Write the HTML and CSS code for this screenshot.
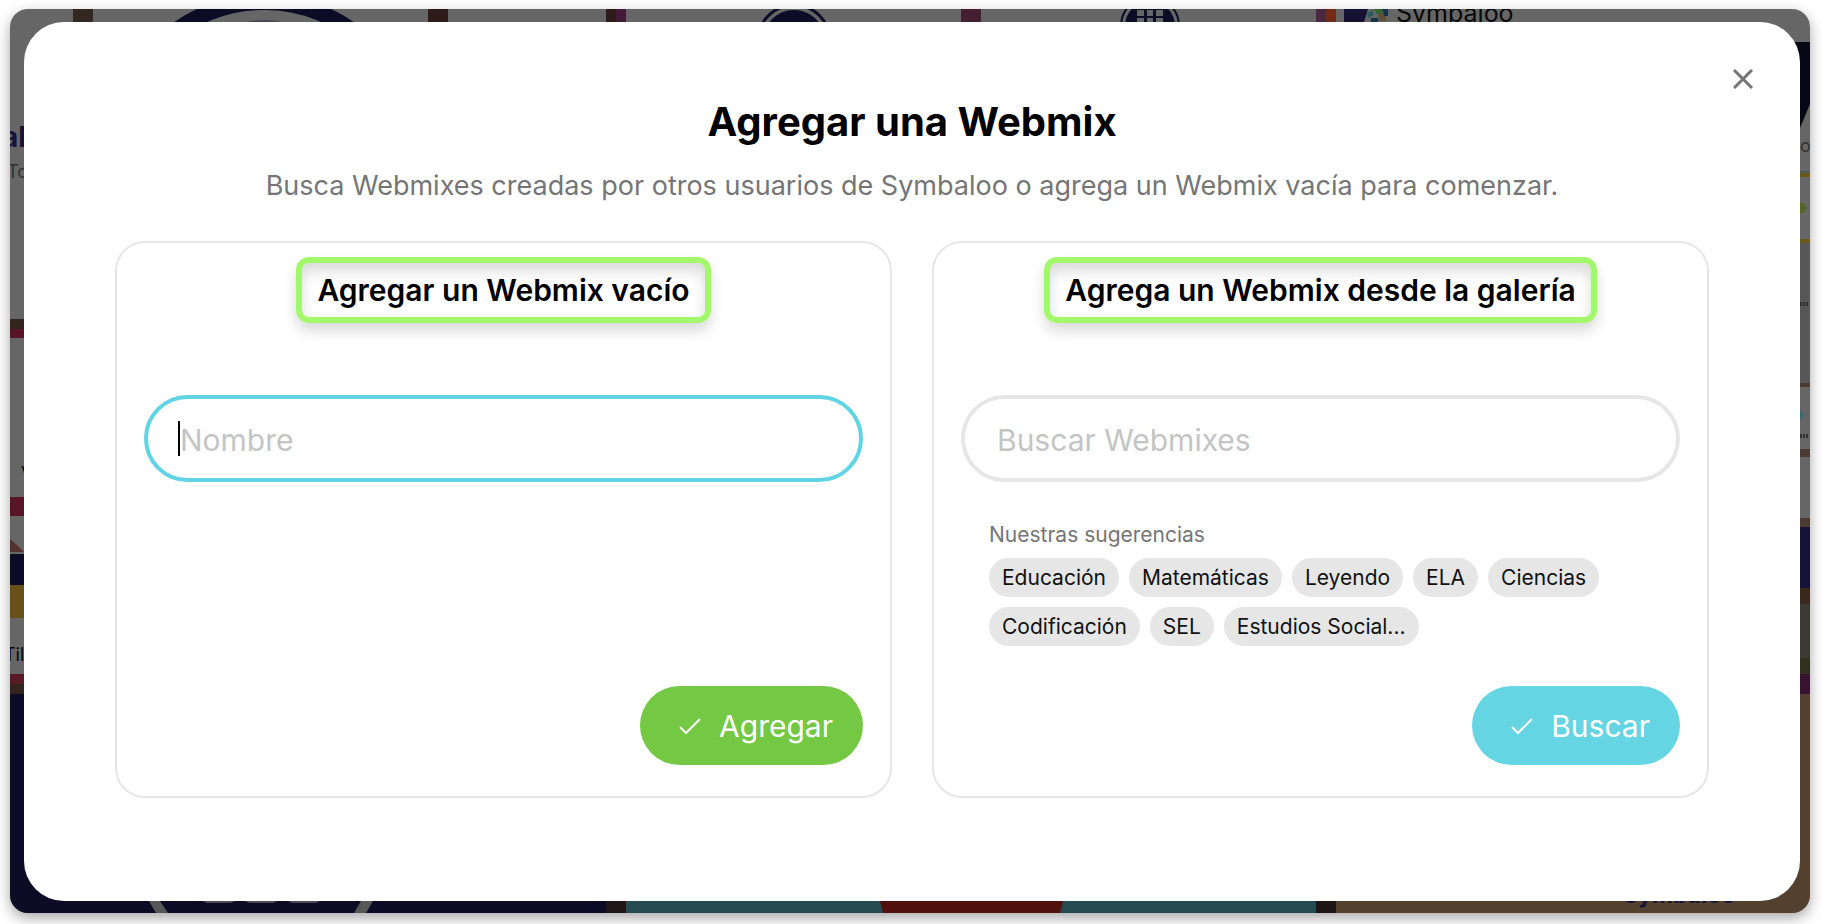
FILE: index.html
```html
<!DOCTYPE html>
<html lang="es">
    <head>
        <title>Agregar una Webmix</title>
        <meta charset="UTF-8">
        <link rel="stylesheet" href="styles.css">
    </head>
    <body>
        <div class="window">
            <!-- webmix detrás del diálogo -->
            <svg class="backdrop" viewBox="10 9 1800 904" preserveAspectRatio="xMidYMid slice" aria-hidden="true">
                <rect x="10" y="9" width="1800" height="904" fill="#666"/>
                <!-- mosaicos de arriba -->
                <rect x="73" y="9" width="20" height="60" fill="#332722"/>
                <rect x="428" y="9" width="20" height="60" fill="#2d1c19"/>
                <rect x="606" y="9" width="10" height="60" fill="#2d1c19"/>
                <rect x="616" y="9" width="10" height="60" fill="#421c36"/>
                <rect x="961" y="9" width="20" height="60" fill="#451e31"/>
                <rect x="1316" y="9" width="10" height="60" fill="#4b2840"/>
                <rect x="1326" y="9" width="10" height="60" fill="#752b13"/>
                <circle cx="264" cy="152" r="150" fill="none" stroke="#0e0b27" stroke-width="16"/>
                <ellipse cx="264" cy="24" rx="20" ry="4" fill="#484756"/>
                <circle cx="794" cy="41" r="31" fill="#0e0b27"/>
                <circle cx="794" cy="41" r="36" fill="none" stroke="#0e0b27" stroke-width="3"/>
                <circle cx="1150" cy="26" r="25" fill="#0e0b27"/>
                <circle cx="1150" cy="26" r="29" fill="none" stroke="#0e0b27" stroke-width="2"/>
                <path d="M1137 10h7v6h-7zM1147 10h6v6h-6zM1156 10h7v6h-7zM1137 18h7v6h-7zM1147 18h6v6h-6zM1156 18h7v6h-7z" fill="#666"/>
                <path d="M1344 9h24l-4 13h-20z" fill="#151234"/>
                <path d="M1367 13l5-3 2 5-6 3z" fill="#2b5a61"/>
                <path d="M1374 9h8v5h-5z" fill="#35642c"/>
                <path d="M1378 14h8v7h-7z" fill="#63503a"/>
                <path d="M1382 9h6v7h-4zM1371 18h7v4h-7z" fill="#17344d"/>
                <text x="1396" y="22" class="tile-name">Symbaloo</text>
                <!-- mosaicos de la izquierda -->
                <text x="2" y="147" class="tile-brand">al</text>
                <text x="7" y="178" class="tile-small">To</text>
                <rect x="10" y="319" width="20" height="10" fill="#33241d"/>
                <rect x="10" y="329" width="20" height="9" fill="#5a1429"/>
                <text x="21" y="476" class="tile-label">v</text>
                <rect x="10" y="497" width="20" height="19" fill="#5a1429"/>
                <path d="M10 539l8 7 6 6H10z" fill="#54312a"/>
                <rect x="10" y="554" width="20" height="31" fill="#0e0b27"/>
                <rect x="10" y="585" width="20" height="33" fill="#695019"/>
                <text x="4" y="661" class="tile-label">Til</text>
                <rect x="10" y="674" width="20" height="10" fill="#591a27"/>
                <rect x="10" y="684" width="20" height="10" fill="#33241d"/>
                <!-- mosaicos de la derecha -->
                <path d="M1770 42h40v62l-10 24h-30z" fill="#080715"/>
                <text x="1800" y="152" class="tile-small">o</text>
                <rect x="1795" y="171" width="15" height="2" fill="#4d585f"/>
                <rect x="1795" y="173" width="15" height="4" fill="#6c571d"/>
                <circle cx="1801" cy="208" r="5" fill="#53661f"/>
                <rect x="1795" y="239" width="15" height="4" fill="#6c571d"/>
                <rect x="1795" y="243" width="15" height="140" fill="#575757"/>
                <path d="M1800 304h8M1800 436h9" stroke="#333" stroke-width="4" stroke-dasharray="2 1"/>
                <rect x="1795" y="383" width="15" height="4" fill="#4c3b30"/>
                <circle cx="1799" cy="415" r="4" fill="#326a70"/>
                <rect x="1795" y="449" width="15" height="8" fill="#4c3b30"/>
                <rect x="1795" y="518" width="15" height="9" fill="#4c3b30"/>
                <rect x="1795" y="527" width="15" height="61" fill="#171237"/>
                <rect x="1795" y="588" width="15" height="16" fill="#38291c"/>
                <rect x="1795" y="604" width="15" height="54" fill="#3b3b33"/>
                <rect x="1795" y="658" width="15" height="16" fill="#30301e"/>
                <rect x="1795" y="674" width="15" height="20" fill="#37132f"/>
                <!-- mosaicos de abajo -->
                <rect x="10" y="694" width="596" height="219" fill="#0e0b27"/>
                <rect x="606" y="694" width="20" height="219" fill="#211518"/>
                <rect x="626" y="694" width="690" height="219" fill="#254b50"/>
                <rect x="1316" y="694" width="20" height="219" fill="#1e1517"/>
                <rect x="1336" y="694" width="474" height="219" fill="#54402f"/>
                <path d="M149 901h11l8 12h-12zM361 901h12l-7 12h-12z" fill="#575757"/>
                <path d="M203 901h32l-4 2h-24zM245 901h32l-4 2h-24zM288 901h32l-4 2h-24z" fill="#4b4b50"/>
                <path d="M880 901h183l-3 12h-177z" fill="#51110d"/>
                <text x="1623" y="903" class="tile-logo">Symbaloo</text>
            </svg>

            <div class="modal" role="dialog" aria-labelledby="modal-title">
                <button class="close" type="button" aria-label="Cerrar">
                    <svg width="20" height="20" viewBox="0 0 20 20"><path d="M1 1l18 18M19 1L1 19"/></svg>
                </button>
                <h1 id="modal-title">Agregar una Webmix</h1>
                <p class="intro">Busca Webmixes creadas por otros usuarios de Symbaloo o agrega un Webmix vacía para comenzar.</p>

                <div class="cards">
                    <form class="card">
                        <h2><label for="nombre">Agregar un Webmix vacío</label></h2>
                        <div class="field">
                            <input class="active" id="nombre" type="text" placeholder="Nombre">
                            <span class="caret"></span>
                        </div>
                        <button class="btn btn-add" type="button">
                            <svg width="24" height="20" viewBox="0 0 24 20"><path d="M2 11l6 6L22 3"/></svg>
                            Agregar
                        </button>
                    </form>

                    <form class="card">
                        <h2><label for="buscar">Agrega un Webmix desde la galería</label></h2>
                        <div class="field">
                            <input id="buscar" type="text" placeholder="Buscar Webmixes">
                        </div>
                        <div class="suggestions">
                            <p>Nuestras sugerencias</p>
                            <div class="chips">
                                <button type="button">Educación</button>
                                <button type="button">Matemáticas</button>
                                <button type="button">Leyendo</button>
                                <button type="button">ELA</button>
                                <button type="button">Ciencias</button>
                                <button type="button">Codificación</button>
                                <button type="button">SEL</button>
                                <button type="button">Estudios Social...</button>
                            </div>
                        </div>
                        <button class="btn btn-search" type="button">
                            <svg width="24" height="20" viewBox="0 0 24 20"><path d="M2 11l6 6L22 3"/></svg>
                            Buscar
                        </button>
                    </form>
                </div>
            </div>
        </div>
    </body>
</html>
```
FILE: styles.css
```css
* {
    margin: 0;
    padding: 0;
    box-sizing: border-box;
}

body {
    display: flex;
    min-height: 100vh;
    padding: 9px 12px 11px 10px;
    background: #fff;
    font-family: Inter, "Open Sans", sans-serif;
    color: #000;
}

button,
input {
    font-family: inherit;
    border: 0;
}

button {
    cursor: pointer;
}

.window {
    position: relative;
    display: flex;
    flex: 1;
    padding: 13px 10px 12px 14px;
    border-radius: 18px;
    box-shadow: 0 5px 14px rgba(0, 0, 0, 0.35);
}

.backdrop {
    position: absolute;
    top: 0;
    left: 0;
    width: 100%;
    height: 100%;
    border-radius: 18px;
}

.tile-name {
    font-size: 25px;
    fill: #080808;
}

.tile-brand {
    font-size: 28px;
    font-weight: 700;
    fill: #17133a;
}

.tile-logo {
    font-size: 23px;
    font-weight: 700;
    fill: #17133a;
}

.tile-small {
    font-size: 18px;
    fill: #333;
}

.tile-label {
    font-size: 18px;
    fill: #080808;
}

.modal {
    position: relative;
    flex: 1;
    padding: 78px 91px 60px;
    background: #fff;
    border-radius: 40px;
}

.close {
    position: absolute;
    top: 41px;
    right: 41px;
    display: flex;
    padding: 6px;
    background: none;
}

.close svg {
    fill: none;
    stroke: #757575;
    stroke-width: 3;
}

h1 {
    font-size: 40px;
    line-height: 44px;
    text-align: center;
}

.intro {
    margin: 26px 0 39px;
    font-size: 27px;
    line-height: 32px;
    text-align: center;
    color: #757575;
}

.cards {
    display: grid;
    grid-template-columns: 1fr 1fr;
    gap: 40px;
}

.card {
    display: flex;
    flex-direction: column;
    padding: 14px 27px 31px;
    border: 2px solid #e6e6e6;
    border-radius: 30px;
}

.card h2 {
    align-self: center;
    margin-bottom: 72px;
    padding: 10px 15px;
    border: 6px solid #a3f76b;
    border-radius: 13px;
    font-size: 30px;
    font-weight: 600;
    line-height: 34px;
    box-shadow: 0 8px 14px rgba(0, 0, 0, 0.15), inset 0 8px 14px rgba(0, 0, 0, 0.15);
}

.field {
    position: relative;
}

.field input {
    display: block;
    width: 100%;
    height: 87px;
    padding: 2px 32px 0;
    border: 4px solid #e6e6e6;
    border-radius: 44px;
    outline: none;
    background: #fff;
    font-size: 30px;
}

.field input::placeholder {
    color: #c4c4c4;
}

.field .active {
    border-color: #61d4e4;
}

.caret {
    position: absolute;
    top: 26px;
    left: 34px;
    width: 2px;
    height: 35px;
    background: #000;
}

.suggestions {
    margin: 41px 28px 40px;
}

.suggestions p {
    margin-bottom: 11px;
    font-size: 21px;
    line-height: 24px;
    color: #757575;
}

.chips {
    display: flex;
    flex-wrap: wrap;
    gap: 10px;
}

.chips button {
    height: 39px;
    padding: 0 13px;
    border-radius: 20px;
    background: #e6e6e6;
    font-size: 21px;
    color: #111;
}

.btn {
    display: flex;
    align-items: center;
    align-self: flex-end;
    gap: 17px;
    height: 79px;
    margin-top: auto;
    padding: 0 30px 0 38px;
    border-radius: 40px;
    font-size: 30px;
    color: #fff;
}

.btn svg {
    fill: none;
    stroke: #fff;
    stroke-width: 2;
}

.btn-add {
    background: #74c843;
}

.btn-search {
    background: #65d4e3;
}
```
